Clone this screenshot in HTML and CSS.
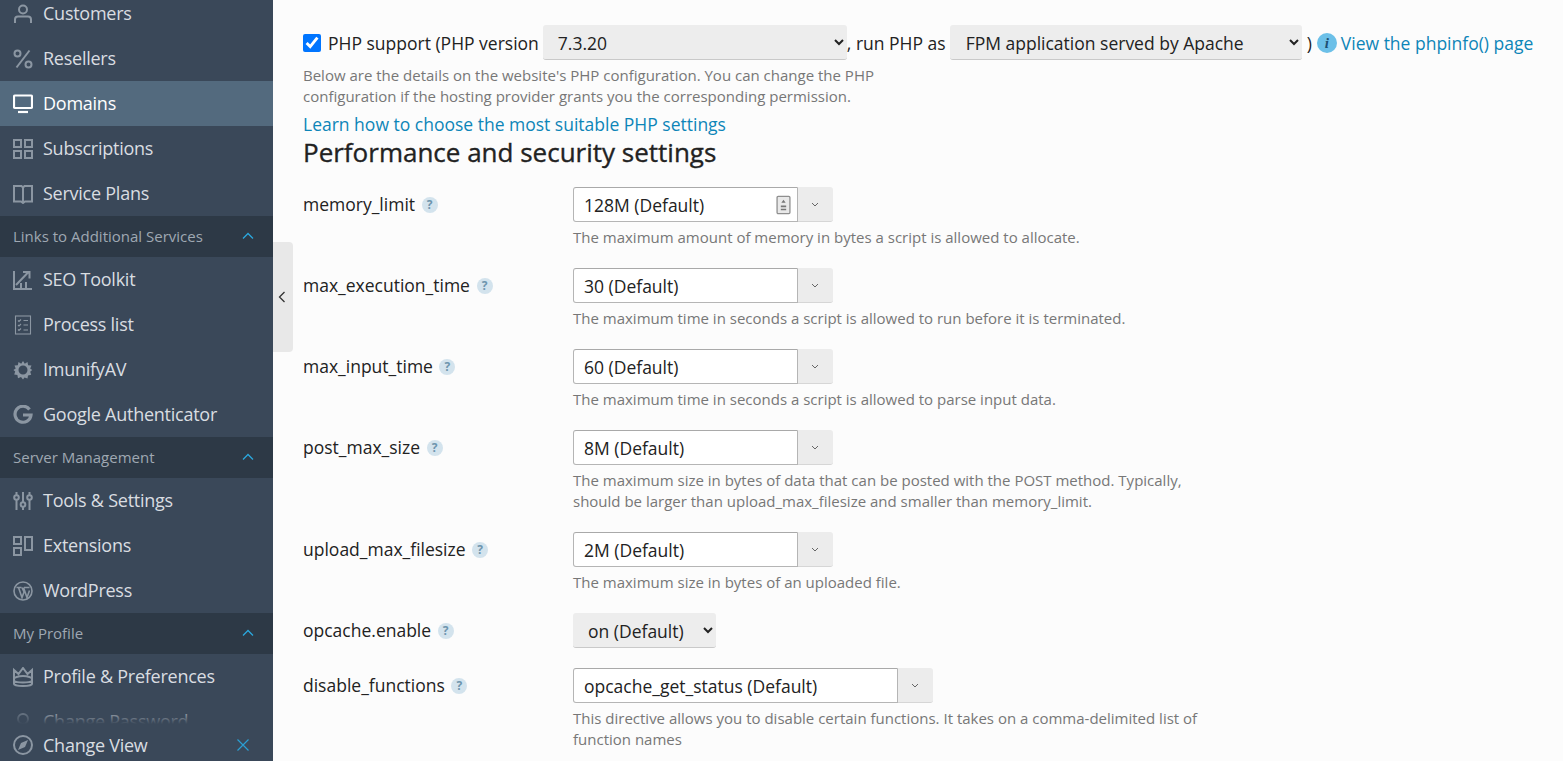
FILE: index.html
```html
<!DOCTYPE html>
<html lang="en">
<head>
<meta charset="utf-8">
<title>PHP settings</title>
<link rel="stylesheet" href="styles.css">
</head>
<body>
<div class="app">
  <aside class="sidebar">
    <nav class="nav">
      <a class="item"><svg class="ico" viewBox="0 0 20 20"><circle cx="10" cy="5.5" r="4"/><path d="M2 19v-3.500c0-2 1.500-3 3-3h10c1.500 0 3 1 3 3V19"/></svg>Customers</a>
      <a class="item"><svg class="ico" viewBox="0 0 20 20"><circle cx="4.5" cy="4.5" r="3"/><circle cx="15.5" cy="15.5" r="3"/><path d="M16.5 1.5 3.5 18.5"/></svg>Resellers</a>
      <a class="item active"><svg class="ico" viewBox="0 0 20 20"><rect x="1" y="1.500" width="18" height="12.500" rx="1"/><path d="M5 18h10"/></svg>Domains</a>
      <a class="item"><svg class="ico" viewBox="0 0 20 20"><rect x="1" y="1" width="7" height="7"/><rect x="12" y="1" width="7" height="7"/><rect x="1" y="12" width="7" height="7"/><rect x="12" y="12" width="7" height="7"/></svg>Subscriptions</a>
      <a class="item"><svg class="ico" viewBox="0 0 20 20"><path d="M1 2h7.500L10 3.500 11.500 2H19v15.500h-7L10 19l-2-1.500H1zM10 3.500v15"/></svg>Service Plans</a>
      <div class="section"><span>Links to Additional Services</span><svg class="chev" viewBox="0 0 12 8"><path d="M1 6.500 6 1.500l5 5"/></svg></div>
      <a class="item"><svg class="ico" viewBox="0 0 20 20"><path d="M1 1v18h18M3 15 15 2.500M10 2h6.500v6.500M8 19v-6M13 19v-7"/></svg>SEO Toolkit</a>
      <a class="item"><svg class="ico ico-thin" viewBox="0 0 20 20"><rect x="2.500" y="1" width="15" height="18"/><path d="M5 5.500l1 1 2-2M5 10l1 1 2-2M5 14.500l1 1 2-2M10.500 5.500h4.500M10.500 10h4.500M10.500 15h4.500"/></svg>Process list</a>
      <a class="item"><svg class="ico ico-solid" viewBox="0 0 20 20"><path fill-rule="evenodd" d="M10 1l1.800 2.700L14.500 2l.6 3.200 3.400.4-1.300 3 2 1.400-2 1.800 1 3-3.200.6-.5 3.200-3-1.100L10 19.500l-2-2.400-3 1.100-.6-3.200-3.200-.6 1-3L.4 10l2.300-1.400-1.200-3 3.300-.4L5.500 2l2.700 1.700zM10 5.500a4.500 4.500 0 1 0 0 9 4.500 4.500 0 0 0 0-9z"/></svg>ImunifyAV</a>
      <a class="item"><svg class="ico ico-g" viewBox="0 0 20 20"><path d="M16.500 4.500A8 8 0 1 0 18 10H10"/></svg>Google Authenticator</a>
      <div class="section"><span>Server Management</span><svg class="chev" viewBox="0 0 12 8"><path d="M1 6.500 6 1.500l5 5"/></svg></div>
      <a class="item"><svg class="ico" viewBox="0 0 20 20"><path d="M3.500 1v3M3.500 9v10M10 1v10M10 16v3M16.500 1v3M16.500 9v10"/><circle cx="3.500" cy="6.500" r="2.300"/><circle cx="10" cy="13.500" r="2.300"/><circle cx="16.500" cy="6.500" r="2.300"/></svg>Tools &amp; Settings</a>
      <a class="item"><svg class="ico" viewBox="0 0 20 20"><rect x="1" y="1" width="7" height="7"/><rect x="1" y="12" width="7" height="7"/><rect x="12" y="1" width="7" height="13"/></svg>Extensions</a>
      <a class="item"><svg class="ico ico-mid" viewBox="0 0 20 20"><circle cx="10" cy="10" r="9"/><path d="M3.500 6.500h5M11 6.500h5.500M5.500 6.500 9 16.500l2-5.500-2-4.500M10.500 6.500l3.500 10 2.500-7"/></svg>WordPress</a>
      <div class="section"><span>My Profile</span><svg class="chev" viewBox="0 0 12 8"><path d="M1 6.500 6 1.500l5 5"/></svg></div>
      <a class="item"><svg class="ico" viewBox="0 0 20 20"><path d="M1 12V3l4.500 4L10 1l4.500 6L19 3v9M1 12c0-1.500 4-3 9-3s9 1.500 9 3v5c0 1-4 2-9 2s-9-1-9-2zM1 14c3 2 15 2 18 0"/></svg>Profile &amp; Preferences</a>
      <a class="item"><svg class="ico" viewBox="0 0 20 20"><circle cx="10" cy="7" r="5"/></svg>Change Password</a>
    </nav>
    <div class="foot">
      <a class="foot-link"><svg class="ico" viewBox="0 0 20 20"><circle cx="10" cy="10" r="9"/><path class="fill" d="M15 5l-3 7-7 3 3-7z"/></svg>Change View</a>
      <svg class="close" viewBox="0 0 12 12"><path d="M.5.500l11 11M11.500.500l-11 11"/></svg>
    </div>
  </aside>
  <button class="collapse" type="button" aria-label="Collapse"><svg viewBox="0 0 8 12"><path d="M6.500 1 1.500 6l5 5"/></svg></button>
  <main class="main">
    <p class="clipped">Run (CGI) scripts only by the security policy</p>
    <div class="php-row">
      <input class="check" type="checkbox" checked>
      <span class="php-label">PHP support (PHP version</span>
      <select class="sel sel-ver"><option>7.3.20</option></select>
      <span>, run PHP as</span>
      <select class="sel sel-run"><option>FPM application served by Apache</option></select>
      <span class="paren">)</span>
      <span class="info">i</span>
      <a class="link">View the phpinfo() page</a>
    </div>
    <p class="desc">Below are the details on the website's PHP configuration. You can change the PHP configuration if the hosting provider grants you the corresponding permission.</p>
    <a class="link learn">Learn how to choose the most suitable PHP settings</a>
    <h2 class="title">Performance and security settings</h2>

    <div class="row">
      <div class="label">memory_limit <span class="q">?</span></div>
      <div class="field">
        <div class="combo"><div class="val">128M (Default)<svg class="keyicon" viewBox="0 0 14 18"><rect x="1" y="1" width="12" height="16" rx="1"/><path class="fill" d="M7 4l2 3H5zM4.500 9.500h5v1.500h-5zM4.500 12.500h5V14h-5z"/></svg></div><div class="drop"><svg viewBox="0 0 8 5"><path d="M1 1l3 3 3-3"/></svg></div></div>
        <p class="hint">The maximum amount of memory in bytes a script is allowed to allocate.</p>
      </div>
    </div>
    <div class="row">
      <div class="label">max_execution_time <span class="q">?</span></div>
      <div class="field">
        <div class="combo"><div class="val">30 (Default)</div><div class="drop"><svg viewBox="0 0 8 5"><path d="M1 1l3 3 3-3"/></svg></div></div>
        <p class="hint">The maximum time in seconds a script is allowed to run before it is terminated.</p>
      </div>
    </div>
    <div class="row">
      <div class="label">max_input_time <span class="q">?</span></div>
      <div class="field">
        <div class="combo"><div class="val">60 (Default)</div><div class="drop"><svg viewBox="0 0 8 5"><path d="M1 1l3 3 3-3"/></svg></div></div>
        <p class="hint">The maximum time in seconds a script is allowed to parse input data.</p>
      </div>
    </div>
    <div class="row">
      <div class="label">post_max_size <span class="q">?</span></div>
      <div class="field">
        <div class="combo"><div class="val">8M (Default)</div><div class="drop"><svg viewBox="0 0 8 5"><path d="M1 1l3 3 3-3"/></svg></div></div>
        <p class="hint">The maximum size in bytes of data that can be posted with the POST method. Typically, should be larger than upload_max_filesize and smaller than memory_limit.</p>
      </div>
    </div>
    <div class="row">
      <div class="label">upload_max_filesize <span class="q">?</span></div>
      <div class="field">
        <div class="combo"><div class="val">2M (Default)</div><div class="drop"><svg viewBox="0 0 8 5"><path d="M1 1l3 3 3-3"/></svg></div></div>
        <p class="hint">The maximum size in bytes of an uploaded file.</p>
      </div>
    </div>
    <div class="row">
      <div class="label">opcache.enable <span class="q">?</span></div>
      <div class="field">
        <select class="sel sel-on"><option>on (Default)</option></select>
      </div>
    </div>
    <div class="row">
      <div class="label">disable_functions <span class="q">?</span></div>
      <div class="field">
        <div class="combo combo-wide"><div class="val">opcache_get_status (Default)</div><div class="drop"><svg viewBox="0 0 8 5"><path d="M1 1l3 3 3-3"/></svg></div></div>
        <p class="hint">This directive allows you to disable certain functions. It takes on a comma-delimited list of function names</p>
      </div>
    </div>
  </main>
</div>
</body>
</html>
```

FILE: styles.css
```css
* { box-sizing: border-box; }
html, body { margin: 0; height: 100%; overflow: hidden; }
body { font-family: "Open Sans", "Liberation Sans", sans-serif; font-size: 17.5px; color: #222; background: #fcfcfc; }
.app { position: relative; display: flex; height: 761px; overflow: hidden; }

.sidebar { position: relative; flex: 0 0 273px; height: 761px; overflow: hidden; background: #3a4859; }
.nav { margin-top: -9px; }
.item { display: flex; align-items: center; gap: 10px; height: 45px; padding: 0 0 2px 13px; font-size: 18px; letter-spacing: -0.25px; color: #d9dde1; }
.item .ico { margin-top: 2px; }
.item.active { background: #536a7e; color: #fff; }
.ico { flex: 0 0 20px; width: 20px; height: 20px; fill: none; stroke: #8b96a2; stroke-width: 2; }
.item.active .ico { stroke: #fff; stroke-width: 2.2; }
.ico-thin { stroke-width: 1.1; }
.ico-mid { stroke-width: 1.6; }
.ico-solid { fill: #8b96a2; stroke: none; }
.ico-g { stroke-width: 3.2; }
.section { display: flex; align-items: center; justify-content: space-between; height: 41px; padding: 0 19px 2px 13px; background: #2d3946; color: #9fa8b2; font-size: 15px; }
.chev { width: 12px; height: 8px; fill: none; stroke: #2ba7dc; stroke-width: 1.3; }

.foot { position: absolute; left: 0; right: 0; bottom: 0; height: 56px; padding: 24px 24px 0 13px; display: flex; align-items: center; justify-content: space-between; background: linear-gradient(to bottom, rgba(58,72,89,0) 0, #3a4859 19px); }
.foot-link { display: flex; align-items: center; gap: 10px; font-size: 18px; letter-spacing: -0.25px; color: #d9dde1; }
.foot .fill { fill: #8b96a2; stroke: none; }
.close { width: 12px; height: 12px; fill: none; stroke: #2a9fd3; stroke-width: 1.2; }

.collapse { position: absolute; left: 273px; top: 242px; width: 20px; height: 110px; padding: 0 2px 0 0; border: 0; border-radius: 0 4px 4px 0; background: #e8e8e8; display: flex; align-items: center; justify-content: center; }
.collapse svg { width: 8px; height: 12px; fill: none; stroke: #333; stroke-width: 1.3; }

.main { flex: 1; min-width: 0; padding-left: 30px; }
.clipped { margin: -22px 0 0; height: 23px; line-height: 23px; white-space: nowrap; }
.php-row { display: flex; align-items: center; margin-top: 24px; height: 35px; white-space: nowrap; }
.check { width: 18px; height: 18px; margin: 0 7px 0 0; accent-color: #0075ff; }
.php-label { margin-right: 4px; }
.sel { height: 35px; border: 0; border-bottom: 1px solid #c9c9c9; border-radius: 3px; background-color: #ededed; color: #222; font: inherit; padding: 1px 7px 0 11px; }
.sel-ver { width: 304px; }
.sel-run { width: 352px; margin-left: 4px; padding-left: 12px; }
.sel-on { width: 143px; }
.paren { margin-left: 5px; }
.info { width: 20px; height: 20px; margin: 0 4px 0 5px; border-radius: 50%; background: #6cc0e8; color: #1d4f73; font: italic 700 15px/20px "Liberation Serif", serif; text-align: center; }
.link { color: #0d85b8; }
.desc { width: 600px; margin: 5px 0 0; font-size: 15px; line-height: 21px; color: #777; }
.learn { display: block; margin-top: 6px; line-height: 22px; }
.title { margin: 0; font-size: 26px; line-height: 34px; font-weight: 400; -webkit-text-stroke: 0.35px #222; color: #222; }

.row { display: flex; margin-top: 20px; }
.title + .row { margin-top: 18px; }
.label { flex: 0 0 270px; line-height: 34px; }
.q { display: inline-block; width: 16px; height: 16px; margin-left: 2px; border-radius: 50%; background: #d3e3ed; color: #6e95ad; font-size: 12px; font-weight: 700; line-height: 16px; text-align: center; vertical-align: 2px; }
.field { width: 640px; }
.combo { display: flex; width: 260px; height: 35px; }
.combo-wide { width: 360px; }
.val { flex: 1; display: flex; align-items: center; justify-content: space-between; padding: 0 6px 0 10px; background: #fff; border: 1px solid #b5b5b5; border-top-color: #a9a9a9; border-radius: 3px 0 0 3px; }
.drop { flex: 0 0 35px; display: flex; align-items: center; justify-content: center; padding-right: 1px; background: #ececec; border-radius: 0 3px 3px 0; border-bottom: 1px solid #d6d6d6; }
.drop svg { width: 8px; height: 5px; fill: none; stroke: #666; stroke-width: 1; }
.keyicon { width: 15px; height: 20px; fill: #e9e9e9; stroke: #8f8f8f; stroke-width: 1.2; }
.keyicon .fill { fill: #777; stroke: none; }
.hint { margin: 5px 0 0; font-size: 15px; line-height: 21px; color: #777; }
```
